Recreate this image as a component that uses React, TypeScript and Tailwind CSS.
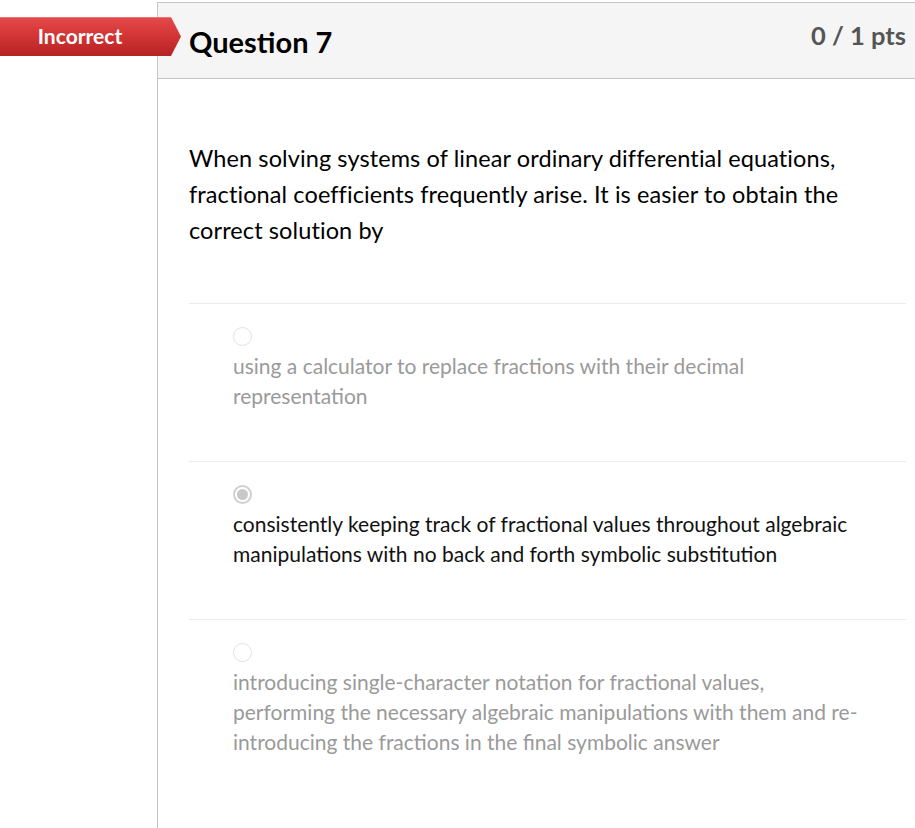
import React from "react";

const answers = [
  {
    text: "using a calculator to replace fractions with their decimal representation",
    selected: false,
  },
  {
    text: "consistently keeping track of fractional values throughout algebraic manipulations with no back and forth symbolic substitution",
    selected: true,
  },
  {
    text: "introducing single-character notation for fractional values, performing the necessary algebraic manipulations with them and re-introducing the fractions in the final symbolic answer",
    selected: false,
  },
];

function Radio({ selected }: { selected: boolean }) {
  if (selected) {
    return (
      <div className="w-[19px] h-[19px] rounded-full border-[2px] border-[#d0d0d0] bg-white flex items-center justify-center">
        <div className="w-[11px] h-[11px] rounded-full bg-[#c8c8c8]" />
      </div>
    );
  }
  return <div className="w-[19px] h-[19px] rounded-full border border-[#e2e2e2] bg-white" />;
}

export default function App() {
  return (
    <div
      className="relative w-[915px] h-[828px] bg-white overflow-hidden"
      style={{ fontFamily: "Lato, 'Open Sans', sans-serif" }}
    >
      <div className="flex pt-[2px] h-full">
        <div className="w-[157px] shrink-0" />
        <div className="flex-1 min-w-0 border-l border-t border-[#c4c4c4] h-full">
          <div className="h-[76px] bg-[#f5f5f5] border-b border-[#c4c4c4] flex justify-between pl-[31px] pr-[9px]">
            <div className="pt-[19px] text-[29px] leading-[40px] font-bold text-black">Question 7</div>
            <div className="pt-[12px] text-[25.5px] leading-[40px] font-bold text-[#555555]">0 / 1 pts</div>
          </div>
          <div className="pl-[31px] pr-[9px] pt-[61px]">
            <p className="text-[23.5px] leading-[36px] text-black pr-[40px] tracking-[0.1px]">
              When solving systems of linear ordinary differential equations, fractional coefficients frequently arise. It is easier to obtain the correct solution by
            </p>
            <div className="mt-[55px]">
              {answers.map((a, i) => (
                <div key={i} className="border-t border-[#ececec] pt-[23px] pb-[50px] pl-[44px] pr-[40px]">
                  <Radio selected={a.selected} />
                  <div
                    className={`mt-[5px] text-[21px] leading-[30px] ${a.selected ? "text-[#111111]" : "text-[#9a9a9a]"}`}
                  >
                    {a.text}
                  </div>
                </div>
              ))}
            </div>
          </div>
        </div>
      </div>
      <div className="absolute left-0 top-[17px] h-[39px] w-[181px]">
        <svg width="181" height="39" viewBox="0 0 181 39" className="absolute inset-0">
          <defs>
            <linearGradient id="rg" x1="0" y1="0" x2="0" y2="1">
              <stop offset="0" stopColor="#e54a4a" />
              <stop offset="0.5" stopColor="#d23434" />
              <stop offset="1" stopColor="#b52323" />
            </linearGradient>
          </defs>
          <polygon points="0,0 171,0 181,19.5 171,39 0,39" fill="url(#rg)" />
          <line x1="0" y1="0.5" x2="171" y2="0.5" stroke="#ee7474" strokeWidth="1" />
        </svg>
        <div className="absolute left-0 top-0 w-[160px] h-[37px] flex items-center justify-center text-white font-bold text-[21px]">
          Incorrect
        </div>
      </div>
    </div>
  );
}
